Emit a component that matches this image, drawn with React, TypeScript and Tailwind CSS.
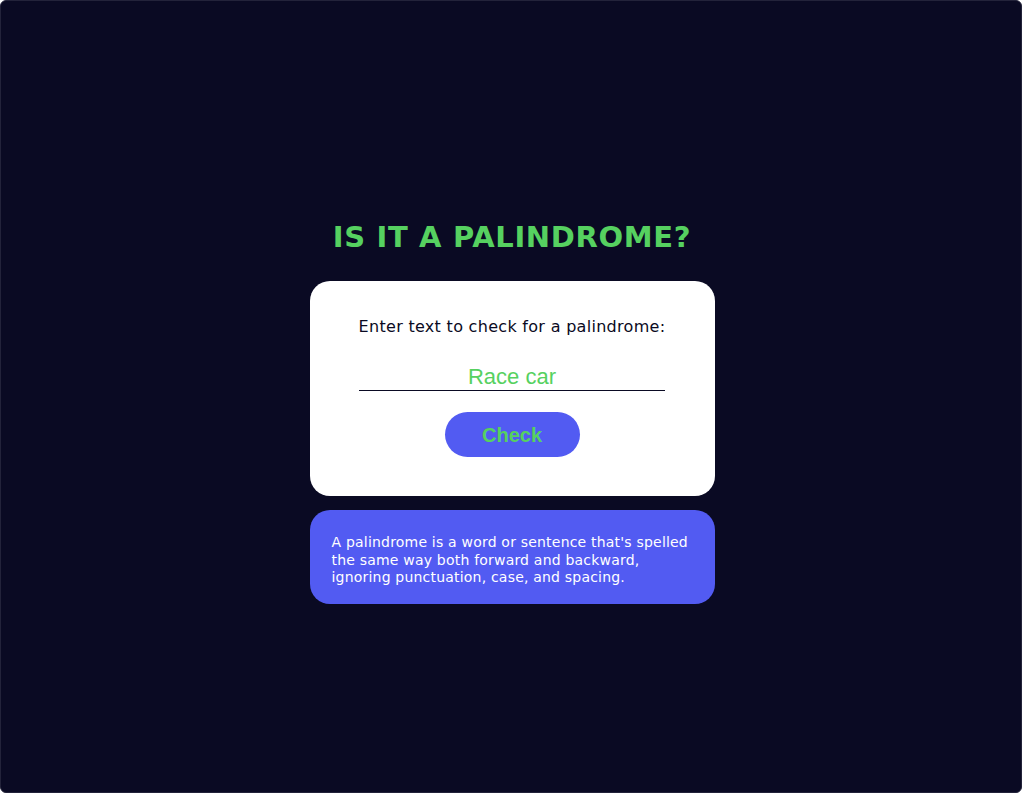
import { useState } from 'react';

export default function App() {
  const [text, setText] = useState('Race car');

  return (
    <div className="h-[793px] w-full overflow-hidden rounded-[6px] border border-[#23233a] bg-[#0a0a23] font-['DejaVu_Sans',Verdana,sans-serif]">
      <main className="flex flex-col items-center pt-[218px] pl-[2px]">
        <h1 className="text-[29px] font-bold leading-[36px] tracking-[0.65px] text-[#56d160]">
          IS IT A PALINDROME?
        </h1>

        <div className="mt-[26px] flex w-[405px] flex-col items-center rounded-[20px] bg-white pt-[36px] pb-[39px]">
          <label htmlFor="text-input" className="text-[16px] leading-[20px] tracking-[0.3px] text-[#0a0a23]">
            Enter text to check for a palindrome:
          </label>
          <input
            id="text-input"
            value={text}
            onChange={(e) => setText(e.target.value)}
            className="mt-[26px] h-[28px] w-[306px] border-b border-[#0a0a23] bg-transparent text-center font-['Liberation_Sans',Arial,sans-serif] text-[22px] leading-[28px] text-[#56d160] outline-none"
          />
          <button
            type="button"
            className="mt-[21px] h-[45px] w-[135px] rounded-full bg-[#525bf2] font-['Liberation_Sans',Arial,sans-serif] text-[20px] font-bold text-[#56d160]"
          >
            Check
          </button>
        </div>

        <div className="mt-[14px] w-[405px] rounded-[20px] bg-[#525bf2] px-[22px] pt-[24px] pb-[17.5px]">
          <p className="text-[14px] leading-[17.5px] tracking-[0.2px] text-white">
            A palindrome is a word or sentence that's spelled the same way both forward and backward,
            ignoring punctuation, case, and spacing.
          </p>
        </div>
      </main>
    </div>
  );
}
